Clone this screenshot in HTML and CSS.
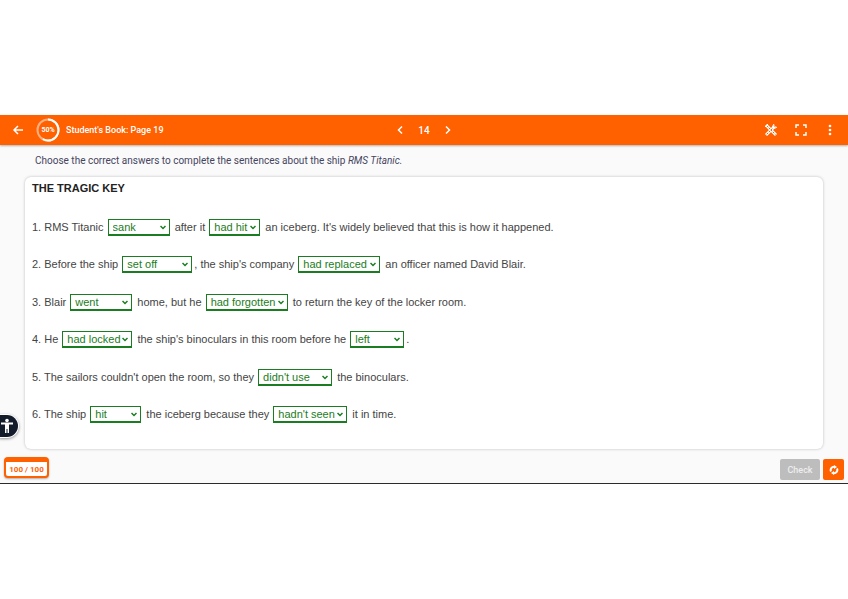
FILE: index.html
```html
<!doctype html>
<html lang="en">
	<head>
		<meta charset="utf-8">
		<title>Student's Book: Page 19</title>
		<link rel="stylesheet" href="styles.css">
	</head>
	<body>
		<div class="player">
			<header class="topbar">
				<div class="topbar-left">
					<button class="icon-btn" aria-label="Back">
						<svg width="12" height="12" viewBox="0 0 12 12"><path d="M11 6H2M6 2L2 6l4 4"/></svg>
					</button>
					<div class="progress">
						<svg width="24" height="24" viewBox="0 0 24 24">
							<circle class="track" cx="12" cy="12" r="10.5"/>
							<circle class="done" cx="12" cy="12" r="10.5" pathLength="100" stroke-dasharray="58 42" transform="rotate(-90 12 12)"/>
						</svg>
						<span>50%</span>
					</div>
					<h1>Student's Book: Page 19</h1>
				</div>
				<nav class="pager">
					<button class="icon-btn" aria-label="Previous">
						<svg width="8" height="10" viewBox="0 0 8 10"><path d="M6 1.500L2.500 5 6 8.500"/></svg>
					</button>
					<span>14</span>
					<button class="icon-btn" aria-label="Next">
						<svg width="8" height="10" viewBox="0 0 8 10"><path d="M2 1.500L5.500 5 2 8.500"/></svg>
					</button>
				</nav>
				<div class="tools">
					<button class="icon-btn" aria-label="Tools">
						<svg width="14" height="14" viewBox="0 0 14 14">
							<g stroke-width="3"><path d="M2 2l10 10M11 3L2 12"/></g>
							<g class="cut"><path d="M2.500 2.500l9 9M10.500 3.500l-8 8"/></g>
							<g stroke-width="1"><path d="M10 1L8.500 3.500l2 2L13 4M1 4l3-3"/></g>
						</svg>
					</button>
					<button class="icon-btn" aria-label="Full screen">
						<svg width="14" height="14" viewBox="0 0 14 14"><path stroke-width="2" d="M2 5V2h3M9 2h3v3M12 9v3H9M5 12H2V9"/></svg>
					</button>
					<button class="icon-btn" aria-label="More">
						<svg class="dots" width="4" height="12" viewBox="0 0 4 12"><circle cx="2" cy="2" r="1.300"/><circle cx="2" cy="6" r="1.300"/><circle cx="2" cy="10" r="1.300"/></svg>
					</button>
				</div>
			</header>

			<main>
				<p class="rubric">Choose the correct answers to complete the sentences about the ship <em>RMS Titanic.</em></p>

				<section class="card">
					<h2>THE TRAGIC KEY</h2>
					<p>1. RMS Titanic <select class="m" aria-label="Gap 1"><option>sank</option></select> after it <select class="s" aria-label="Gap 2"><option>had hit</option></select> an iceberg. It's widely believed that this is how it happened.</p>
					<p>2. Before the ship <select class="l" aria-label="Gap 3"><option>set off</option></select>, the ship's company <select class="xxl" aria-label="Gap 4"><option>had replaced</option></select> an officer named David Blair.</p>
					<p>3. Blair <select class="m" aria-label="Gap 5"><option>went</option></select> home, but he <select class="xxl" aria-label="Gap 6"><option>had forgotten</option></select> to return the key of the locker room.</p>
					<p>4. He <select class="l" aria-label="Gap 7"><option>had locked</option></select> the ship's binoculars in this room before he <select class="sm" aria-label="Gap 8"><option>left</option></select>.</p>
					<p>5. The sailors couldn't open the room, so they <select class="xl" aria-label="Gap 9"><option>didn't use</option></select> the binoculars.</p>
					<p>6. The ship <select class="s" aria-label="Gap 10"><option>hit</option></select> the iceberg because they <select class="xl" aria-label="Gap 11"><option>hadn't seen</option></select> it in time.</p>
				</section>
			</main>

			<footer>
				<div class="score">100 / 100</div>
				<div class="actions">
					<button class="check" disabled>Check</button>
					<button class="reset" aria-label="Try again">
						<svg width="10" height="10" viewBox="0 0 10 10"><path d="M2 6.500A3.300 3.300 0 0 1 5.500 1.800M8 3.500A3.300 3.300 0 0 1 4.500 8.200"/><path class="head" d="M5 0l3 2-3 2zM5 10L2 8l3-2z"/></svg>
					</button>
				</div>
			</footer>

			<button class="a11y" aria-label="Accessibility">
				<svg width="14" height="16" viewBox="0 0 14 16"><circle cx="7" cy="2.500" r="1.800"/><path d="M1 4.500h12v2H9V15H7.500v-4h-1v4H5V6.500H1z"/></svg>
			</button>
		</div>
	</body>
</html>
```
FILE: styles.css
```css
:root {
	--orange: #ff6000;
	--green: #1b7d22;
}

* {
	box-sizing: border-box;
}

body {
	margin: 0;
	padding-top: 115px;
	background: #fff;
	font-family: "Liberation Sans", Arial, sans-serif;
	font-size: 11px;
	color: #444;
}

button {
	border: 0;
	padding: 0;
	font: inherit;
}

svg {
	display: block;
}

.player {
	position: relative;
	background: #fafafa;
	border-bottom: 1px solid #2b2b2b;
}

/* top bar */

.topbar {
	display: grid;
	grid-template-columns: 1fr auto 1fr;
	align-items: center;
	height: 30px;
	padding: 0 16px 0 12px;
	background: var(--orange);
	color: #fff;
	font-family: Roboto, sans-serif;
	font-weight: 500;
	font-size: 10px;
	box-shadow: 0 1px 2px rgba(0, 0, 0, 0.3);
}

.topbar-left,
.pager,
.tools {
	display: flex;
	align-items: center;
}

.topbar-left {
	gap: 12px;
}

.pager {
	gap: 14px;
	padding-left: 4px;
}

.tools {
	gap: 16px;
	justify-content: flex-end;
}

.tools .icon-btn:last-child {
	margin-left: 4px;
}

.topbar h1 {
	margin: 0 0 0 -6px;
	font-size: 9px;
	font-weight: 500;
}

.icon-btn {
	background: none;
	color: #fff;
}

.icon-btn path {
	fill: none;
	stroke: #fff;
	stroke-width: 1.5;
}

.icon-btn g path {
	stroke-width: inherit;
}

.icon-btn .cut {
	stroke-width: 1;
}

.icon-btn .cut path {
	stroke: var(--orange);
	stroke-dasharray: 2 1;
}

.icon-btn .dots {
	fill: #fff;
}

.progress {
	display: grid;
	place-items: center;
	font-size: 7px;
	font-weight: 700;
}

.progress > * {
	grid-area: 1 / 1;
}

.progress circle {
	fill: none;
	stroke-width: 2;
}

.progress .track {
	stroke: #ffb080;
}

.progress .done {
	stroke: #fff;
}

/* exercise */

.rubric {
	margin: 0;
	padding: 9px 35px 10px;
	font-family: Roboto, sans-serif;
	font-size: 10px;
	line-height: 13px;
	color: #45455f;
}

.card {
	margin: 0 25px;
	padding: 4px 7px 16px;
	background: #fff;
	border-radius: 6px;
	box-shadow: 0 0 3px rgba(0, 0, 0, 0.25);
}

.card h2 {
	margin: 0 0 12px;
	font-size: 11px;
	line-height: 15px;
	color: #222;
}

.card p {
	margin: 0;
	line-height: 38px;
}

.card p:nth-of-type(even) {
	line-height: 37px;
}

.card select {
	appearance: none;
	height: 17px;
	margin: 0 2px 0 1px;
	padding: 0 4px;
	border: 1px solid var(--green);
	border-bottom-width: 2px;
	border-radius: 0;
	background: #fff url("data:image/svg+xml,%3Csvg xmlns='http://www.w3.org/2000/svg' width='6' height='5'%3E%3Cpath d='M.5 1L3 3.500 5.500 1' fill='none' stroke='%231b7d22' stroke-width='1.500'/%3E%3C/svg%3E") no-repeat right 3px center;
	font: inherit;
	line-height: 14px;
	color: var(--green);
}

.card .s { width: 51px; }
.card .sm { width: 54px; }
.card .m { width: 62px; }
.card .l { width: 70px; }
.card .xl { width: 74px; }
.card .xxl { width: 82px; }

/* bottom bar */

footer {
	display: flex;
	justify-content: space-between;
	align-items: flex-start;
	padding: 8px 4px 3px;
}

.score {
	width: 45px;
	height: 21px;
	border: 2px solid var(--orange);
	border-top-width: 5px;
	border-radius: 4px;
	background: #fff;
	box-shadow: 0 1px 2px rgba(0, 0, 0, 0.3);
	color: var(--orange);
	font: 700 8px/15px Roboto, sans-serif;
	text-align: center;
}

.actions {
	display: flex;
	gap: 3px;
	padding-top: 2px;
}

.check,
.reset {
	height: 21px;
	border-radius: 2px;
	color: #fff;
}

.check {
	width: 40px;
	background: #bdbdbd;
	font: 500 9px Roboto, sans-serif;
	color: #eee;
}

.reset {
	display: grid;
	place-items: center;
	width: 21px;
	background: var(--orange);
}

.reset path {
	fill: none;
	stroke: #fff;
	stroke-width: 2;
}

.reset .head {
	fill: #fff;
	stroke: none;
}

/* sits over the page edge */
.a11y {
	position: absolute;
	left: 0;
	bottom: 46px;
	display: grid;
	place-items: center start;
	width: 18px;
	height: 22px;
	border-radius: 0 11px 11px 0;
	background: #121c2b;
	box-shadow: 0 0 0 1px #fff, 0 1px 3px 1px rgba(0, 0, 0, 0.4);
}

.a11y svg {
	fill: #fff;
}
```
